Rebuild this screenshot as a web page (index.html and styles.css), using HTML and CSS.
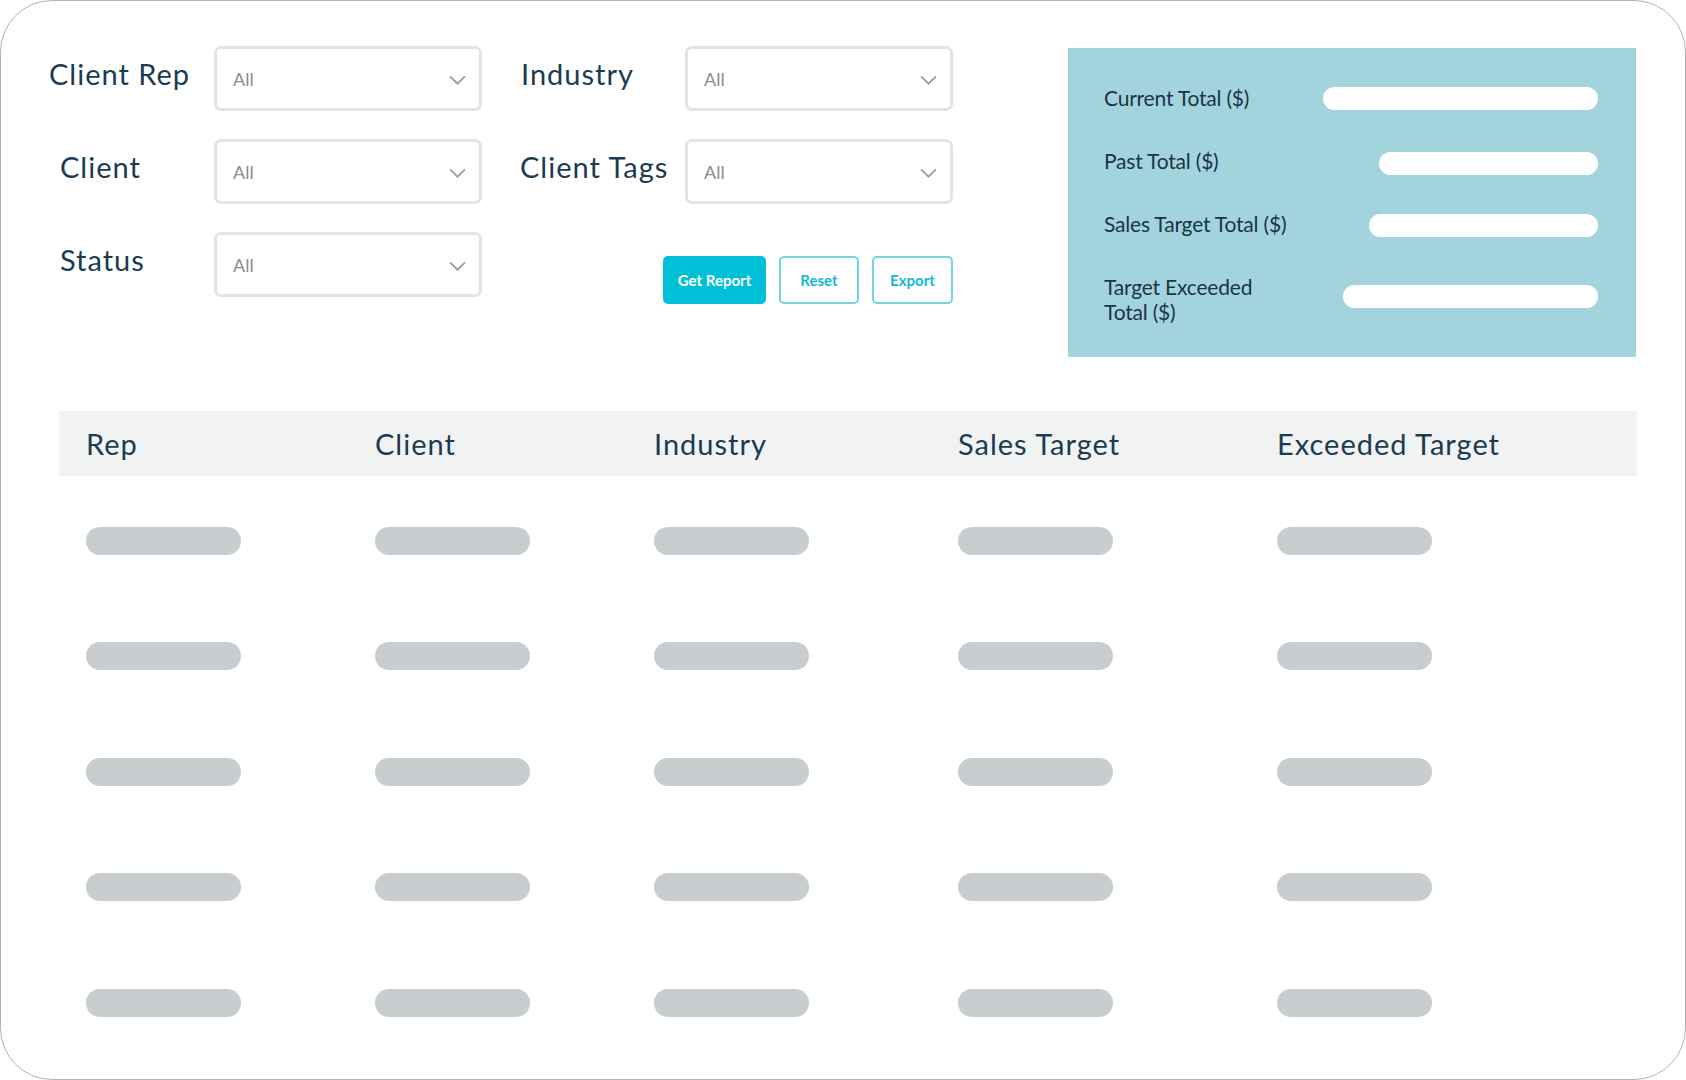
FILE: index.html
```html
<!DOCTYPE html>
<html lang="en">
<head>
<meta charset="utf-8">
<title>Sales Report</title>
<link rel="stylesheet" href="styles.css">
</head>
<body>
<div class="card">
  <div class="top">
    <div class="filters">
      <div class="group">
        <div class="field">
          <span class="label">Client Rep</span>
          <div class="select"><span>All</span><svg class="chev" viewBox="0 0 16 9"><path d="M1 1l7 7 7-7"/></svg></div>
        </div>
        <div class="field">
          <span class="label indent">Client</span>
          <div class="select"><span>All</span><svg class="chev" viewBox="0 0 16 9"><path d="M1 1l7 7 7-7"/></svg></div>
        </div>
        <div class="field">
          <span class="label indent">Status</span>
          <div class="select"><span>All</span><svg class="chev" viewBox="0 0 16 9"><path d="M1 1l7 7 7-7"/></svg></div>
        </div>
      </div>
      <div class="group">
        <div class="field">
          <span class="label l2">Industry</span>
          <div class="select"><span>All</span><svg class="chev" viewBox="0 0 16 9"><path d="M1 1l7 7 7-7"/></svg></div>
        </div>
        <div class="field">
          <span class="label">Client Tags</span>
          <div class="select"><span>All</span><svg class="chev" viewBox="0 0 16 9"><path d="M1 1l7 7 7-7"/></svg></div>
        </div>
        <div class="actions">
          <button class="btn primary">Get Report</button>
          <button class="btn outline reset">Reset</button>
          <button class="btn outline export">Export</button>
        </div>
      </div>
    </div>
    <div class="summary">
      <div class="srow">
        <span class="slabel">Current Total ($)</span>
        <span class="sbar" style="width:275px"></span>
      </div>
      <div class="srow">
        <span class="slabel">Past Total ($)</span>
        <span class="sbar" style="width:219px"></span>
      </div>
      <div class="srow">
        <span class="slabel">Sales Target Total ($)</span>
        <span class="sbar" style="width:229px"></span>
      </div>
      <div class="srow two">
        <span class="slabel">Target Exceeded<br>Total ($)</span>
        <span class="sbar" style="width:255px"></span>
      </div>
    </div>
  </div>

  <div class="table">
    <div class="thead">
      <span>Rep</span><span>Client</span><span>Industry</span><span>Sales Target</span><span>Exceeded Target</span>
    </div>
    <div class="tbody">
      <div class="trow"><i></i><i></i><i></i><i></i><i></i></div>
      <div class="trow"><i></i><i></i><i></i><i></i><i></i></div>
      <div class="trow"><i></i><i></i><i></i><i></i><i></i></div>
      <div class="trow"><i></i><i></i><i></i><i></i><i></i></div>
      <div class="trow"><i></i><i></i><i></i><i></i><i></i></div>
    </div>
  </div>
</div>
</body>
</html>
```

FILE: styles.css
```css
* { box-sizing: border-box; }

html, body {
  margin: 0;
  padding: 0;
  background: #ffffff;
}

body {
  width: 1686px;
  height: 1080px;
  font-family: "Lato", "Noto Sans", sans-serif;
  color: #1b3b52;
}

.card {
  width: 1686px;
  height: 1080px;
  border: 1px solid #b3b3b3;
  border-radius: 52px;
  padding: 45px 49px 0 48px;
  overflow: hidden;
  background: #fff;
}

.top {
  display: flex;
  justify-content: space-between;
  align-items: flex-start;
}

.filters {
  display: flex;
  gap: 38px;
}

.group {
  display: flex;
  flex-direction: column;
  gap: 28px;
}

.field {
  display: flex;
  align-items: flex-start;
  height: 65px;
}

.label {
  width: 165px;
  flex: none;
  font-size: 29px;
  line-height: 34px;
  padding-top: 11px;
  letter-spacing: 1px;
  white-space: nowrap;
}

.label.indent { padding-left: 11px; }
.label.l2 { padding-left: 1px; }

.select {
  width: 268px;
  height: 65px;
  border: 3px solid #e3e3e3;
  border-radius: 7px;
  display: flex;
  align-items: center;
  justify-content: space-between;
  padding: 0 13px 0 16px;
  font-size: 18px;
  color: #8c8c8c;
}

.chev {
  width: 17px;
  height: 10px;
  fill: none;
  stroke: #9a9a9a;
  stroke-width: 1.6;
  margin-top: 2px;
}

.actions {
  display: flex;
  justify-content: flex-end;
  gap: 13px;
  margin-top: 24px;
}

.btn {
  height: 48px;
  border-radius: 5px;
  font-family: "Lato", sans-serif;
  font-weight: 700;
  font-size: 15px;
  letter-spacing: 0;
  padding: 0;
  cursor: pointer;
}

.btn.primary {
  width: 103px;
  background: #00bfd6;
  border: 2px solid #00bfd6;
  color: #ffffff;
}

.btn.outline {
  background: #ffffff;
  border: 2px solid #6fd3e2;
  color: #12b9d1;
}

.btn.reset { width: 80px; }
.btn.export { width: 81px; }

.summary {
  width: 568px;
  height: 309px;
  margin-top: 2px;
  background: #a3d4de;
  padding: 39px 38px 0 36px;
  display: flex;
  flex-direction: column;
  gap: 40px;
}

.srow {
  display: flex;
  justify-content: space-between;
  align-items: center;
  height: 23px;
}

.srow .slabel { margin-top: -2px; }

.srow:nth-child(2) .sbar { margin-top: 3px; }
.srow:nth-child(3) .sbar { margin-top: 2px; }

.srow.two {
  align-items: flex-start;
  height: auto;
  margin-top: -2px;
}

.srow.two .slabel { margin-top: 0; }
.srow.two .sbar { margin-top: 11px; }

.slabel {
  font-size: 21px;
  line-height: 25px;
  letter-spacing: -0.2px;
  color: #1b3547;
}

.sbar {
  display: block;
  height: 23px;
  border-radius: 12px;
  background: #ffffff;
}

.table {
  margin: 54px 0 0 10px;
  width: 1578px;
}

.thead {
  height: 65px;
  background: #f1f3f3;
  display: grid;
  grid-template-columns: 289px 279px 304px 319px 1fr;
  padding-left: 27px;
  align-items: center;
  font-size: 29px;
  line-height: 63px;
  letter-spacing: 1px;
}

.tbody {
  padding-top: 7px;
}

.trow {
  height: 115.5px;
  display: grid;
  grid-template-columns: 289px 279px 304px 319px 1fr;
  padding-left: 27px;
  align-items: center;
}

.trow i {
  display: block;
  width: 155px;
  height: 28px;
  border-radius: 14px;
  background: #c8cecf;
}
```
